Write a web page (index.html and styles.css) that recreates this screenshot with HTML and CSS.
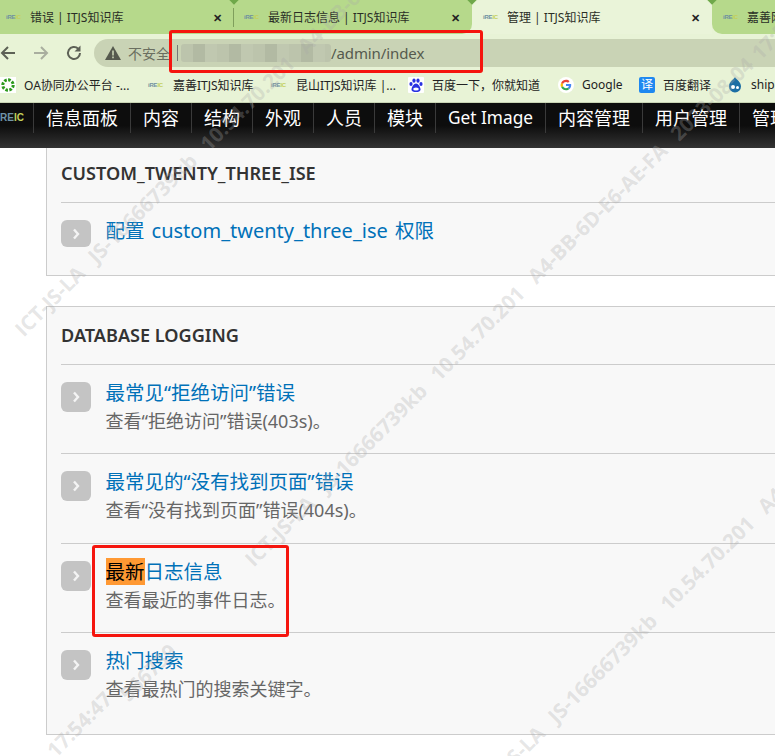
FILE: index.html
```html
<!DOCTYPE html>
<html lang="zh">
<head>
<meta charset="utf-8">
<title>管理 | ITJS知识库</title>
<link rel="stylesheet" href="styles.css">
</head>
<body>
<div class="page">
  <div class="tabstrip">
    <div class="tab tab-a"><span class="fav">iRE<b>IC</b></span><span class="tab-title">错误 | ITJS知识库</span><span class="tab-x">✕</span></div>
    <div class="tab tab-b"><span class="fav">iRE<b>IC</b></span><span class="tab-title">最新日志信息 | ITJS知识库</span><span class="tab-x">✕</span></div>
    <div class="tab tab-active"><span class="fav">iRE<b>IC</b></span><span class="tab-title">管理 | ITJS知识库</span><span class="tab-x">✕</span></div>
    <div class="tab tab-last"><span class="fav">iRE<b>IC</b></span><span class="tab-title">嘉善网</span></div>
  </div>
  <div class="toolbar">
    <svg class="nav-ico back" width="18" height="18" viewBox="0 0 18 18"><path d="M16 9H3M9 3 3 9l6 6" fill="none" stroke="#5d6156" stroke-width="2"/></svg>
    <svg class="nav-ico fwd" width="18" height="18" viewBox="0 0 18 18"><path d="M2 9h13M9 3l6 6-6 6" fill="none" stroke="#a9ae9f" stroke-width="2"/></svg>
    <svg class="nav-ico reload" width="18" height="18" viewBox="0 0 18 18"><path d="M15 9a6 6 0 1 1-1.800-4.300" fill="none" stroke="#5d6156" stroke-width="2"/><path d="M15.500 1.500v6h-6z" fill="#5d6156"/></svg>
    <div class="omnibox">
      <svg class="warn" width="16" height="14" viewBox="0 0 16 14"><path d="M8 0 16 14H0z" fill="#55594e"/><path d="M7.200 4.500h1.600v5H7.200zM7.200 10.500h1.600v1.700H7.200z" fill="#c9d3b5"/></svg>
      <span class="insecure">不安全</span>
      <span class="sep"></span>
      <span class="blur"></span>
      <span class="url">/admin/index</span>
    </div>
  </div>
  <div class="bookmarks">
    <div class="bm bm-oa">
      <svg width="16" height="16" viewBox="0 0 16 16"><rect width="16" height="16" fill="#fff"/><g fill="none" stroke="#2e9a1e" stroke-width="3" stroke-dasharray="2.600 1.400"><circle cx="8" cy="8" r="5.200"/></g></svg>
      <span>OA协同办公平台 -...</span>
    </div>
    <div class="bm bm-js"><span class="fav">iRE<b>IC</b></span><span>嘉善ITJS知识库</span></div>
    <div class="bm bm-ks"><span class="fav">iRE<b>IC</b></span><span>昆山ITJS知识库 |...</span></div>
    <div class="bm bm-bd">
      <svg width="16" height="16" viewBox="0 0 16 16"><rect width="16" height="16" rx="1" fill="#fff"/><g fill="#2932e1"><ellipse cx="3" cy="7" rx="1.600" ry="2.100"/><ellipse cx="6" cy="3.600" rx="1.600" ry="2.200"/><ellipse cx="10" cy="3.600" rx="1.600" ry="2.200"/><ellipse cx="13" cy="7" rx="1.600" ry="2.100"/><path d="M8 6.500c2 0 4.500 3.500 4.500 6 0 2-2 2.500-4.500 2.500S3.500 14.500 3.500 12.500c0-2.500 2.500-6 4.500-6z"/></g><ellipse cx="8" cy="12" rx="2.800" ry="1.600" fill="#fff"/></svg>
      <span>百度一下，你就知道</span>
    </div>
    <div class="bm bm-g">
      <svg width="16" height="16" viewBox="0 0 16 16"><circle cx="8" cy="8" r="8" fill="#fff"/><path d="M13.200 8.100c0-.4 0-.8-.1-1.100H8v2.100h2.900c-.1.700-.5 1.300-1.100 1.700l1.700 1.300c1-.9 1.700-2.300 1.700-4z" fill="#4285f4"/><path d="M8 13.300c1.400 0 2.600-.5 3.500-1.300l-1.700-1.300c-.5.300-1.100.5-1.800.5-1.400 0-2.600-.9-3-2.200L3.200 10.300c.9 1.800 2.700 3 4.800 3z" fill="#34a853"/><path d="M5 9c-.2-.7-.2-1.400 0-2L3.200 5.700c-.8 1.500-.8 3.100 0 4.600z" fill="#fbbc05"/><path d="M8 4.900c.8 0 1.500.3 2 .8l1.500-1.500C10.600 3.300 9.400 2.800 8 2.800c-2.100 0-3.900 1.200-4.800 2.900L5 7c.4-1.200 1.600-2.100 3-2.100z" fill="#ea4335"/></svg>
      <span>Google</span>
    </div>
    <div class="bm bm-fy"><span class="fy-ico">译</span><span>百度翻译</span></div>
    <div class="bm bm-sh">
      <svg width="16" height="16" viewBox="0 0 16 16"><path d="M8 0c1 2.500 6 4.500 6 9.500A6 6 0 0 1 2 9.500C2 4.500 7 2.500 8 0z" fill="#1c6ea4"/><circle cx="6" cy="10" r="2" fill="#fff"/><circle cx="10.500" cy="10.500" r="1.500" fill="#fff"/></svg>
      <span>ship</span>
    </div>
  </div>
  <nav class="sitenav">
    <span class="logo">RE<b>IC</b></span>
    <a class="nav-item nav-1">信息面板</a>
    <a class="nav-item nav-2">内容</a>
    <a class="nav-item nav-2">结构</a>
    <a class="nav-item nav-2">外观</a>
    <a class="nav-item nav-2">人员</a>
    <a class="nav-item nav-2">模块</a>
    <a class="nav-item nav-3">Get Image</a>
    <a class="nav-item nav-1">内容管理</a>
    <a class="nav-item nav-1">用户管理</a>
    <a class="nav-item nav-last">管理</a>
  </nav>
  <main class="content">
    <section class="panel panel-first">
      <h3 class="panel-title title-first">CUSTOM_TWENTY_THREE_ISE</h3>
      <div class="row row-single">
        <span class="arrow arrow-short"><svg width="8" height="12" viewBox="0 0 8 12"><path d="M2 1.500 6 6l-4 4.500" fill="none" stroke="#f4f4f4" stroke-width="2.400"/></svg></span>
        <div class="row-text"><a class="link link-spaced">配置 <span class="latin">custom_twenty_three_ise</span> 权限</a></div>
      </div>
    </section>
    <section class="panel panel-second">
      <h3 class="panel-title">DATABASE LOGGING</h3>
      <div class="row">
        <span class="arrow"><svg width="8" height="12" viewBox="0 0 8 12"><path d="M2 1.500 6 6l-4 4.500" fill="none" stroke="#f4f4f4" stroke-width="2.400"/></svg></span>
        <div class="row-text"><a class="link">最常见“拒绝访问”错误</a><p class="desc">查看“拒绝访问”错误(403s)。</p></div>
      </div>
      <div class="row">
        <span class="arrow"><svg width="8" height="12" viewBox="0 0 8 12"><path d="M2 1.500 6 6l-4 4.500" fill="none" stroke="#f4f4f4" stroke-width="2.400"/></svg></span>
        <div class="row-text"><a class="link">最常见的“没有找到页面”错误</a><p class="desc">查看“没有找到页面”错误(404s)。</p></div>
      </div>
      <div class="row">
        <span class="arrow"><svg width="8" height="12" viewBox="0 0 8 12"><path d="M2 1.500 6 6l-4 4.500" fill="none" stroke="#f4f4f4" stroke-width="2.400"/></svg></span>
        <div class="row-text"><a class="link"><mark class="hit">最新</mark>日志信息</a><p class="desc">查看最近的事件日志。</p></div>
      </div>
      <div class="row row-last">
        <span class="arrow"><svg width="8" height="12" viewBox="0 0 8 12"><path d="M2 1.500 6 6l-4 4.500" fill="none" stroke="#f4f4f4" stroke-width="2.400"/></svg></span>
        <div class="row-text"><a class="link">热门搜索</a><p class="desc">查看最热门的搜索关键字。</p></div>
      </div>
    </section>
  </main>
</div>
<div class="watermarks">
  <span class="wm wm-1">ICT-JS-LA  JS-16666739kb  10.54.70.201  A4-BB-6D-E6-AE-FA</span>
  <span class="wm wm-2">ICT-JS-LA  JS-16666739kb  10.54.70.201  A4-BB-6D-E6-AE-FA  2023-08-04 17:54:47</span>
  <span class="wm wm-3">ICT-JS-LA  JS-16666739kb  10.54.70.201  A4-BB-6D-E6-AE-FA</span>
  <span class="wm wm-4">17:54:47</span>
  <span class="wm wm-5">566739</span>
</div>
<div class="callout callout-url"></div>
<div class="callout callout-row"></div>
</body>
</html>
```

FILE: styles.css
```css
* { box-sizing: border-box; }
html, body { margin: 0; padding: 0; }
body {
  width: 775px;
  height: 756px;
  overflow: hidden;
  position: relative;
  background: #fff;
  font-family: "Noto Sans", "Noto Sans CJK SC", sans-serif;
}
.page { width: 775px; height: 756px; overflow: hidden; display: flex; flex-direction: column; }

/* browser tabs */
.tabstrip { height: 34px; flex: none; display: flex; background: #e8f3d6; font-size: 12px; color: #2a2e26; white-space: nowrap; overflow: hidden; }
.tab { height: 34px; flex: none; display: flex; align-items: center; position: relative; background: #b6d98b; }
.tab-a { width: 234px; padding-left: 6px; }
.tab-a::after { content: ""; position: absolute; right: 0; top: 8px; width: 1px; height: 19px; background: #7f9f5c; }
.tab-b { width: 238px; padding-left: 10px; border-bottom-right-radius: 10px; }
.tab-active { width: 240px; padding-left: 11px; background: #eaf4d9; border-radius: 10px 10px 0 0; }
.tab-last { flex: 1; padding-left: 11px; border-bottom-left-radius: 10px; }
.tab-b::before, .tab-active::before, .tab-last::before { content: ""; position: absolute; left: -4px; top: -5px; width: 8px; height: 8px; background: #6fa84a; transform: rotate(45deg); }
.fav { width: 18px; font: bold 6px/10px "Liberation Sans", sans-serif; color: #6f8fa0; flex: none; margin-right: 6px; letter-spacing: -.2px; }
.fav b { color: #c3cf5a; }
.tab-title { flex: 1; }
.tab-x { width: 21px; font-size: 11px; font-weight: 700; color: #222; flex: none; }

/* toolbar */
.toolbar { height: 33px; flex: none; background: #e8f3d6; display: flex; align-items: center; padding-top: 4px; }
.nav-ico { flex: none; }
.back { margin-left: -1px; }
.fwd { margin-left: 15px; }
.reload { margin-left: 15px; }
.omnibox { margin-left: 11px; flex: 1; height: 28px; background: #c9d3b5; border-radius: 14px 0 0 14px; display: flex; align-items: center; padding-left: 11px; font-size: 14px; color: #5b5f53; white-space: nowrap; }
.warn { flex: none; }
.insecure { margin-left: 7px; color: #6a6e60; }
.sep { width: 1px; height: 16px; background: #777; margin-left: 7px; flex: none; }
.blur { width: 150px; height: 18px; margin-left: 3px; flex: none; background: repeating-linear-gradient(90deg, #bcc4ac 0 12px, #b2baa3 12px 24px, #c0c8b0 24px 36px); border-radius: 3px; }
.url { color: #555a4e; font-size: 15px; letter-spacing: -.1px; }

/* bookmarks */
.bookmarks { height: 36px; flex: none; background: #e8f3d6; display: flex; align-items: center; font-size: 12px; color: #222; white-space: nowrap; border-bottom: 1px solid #c8d4b4; overflow: hidden; }
.bm { display: flex; align-items: center; flex: none; }
.bm svg { margin-right: 8px; flex: none; }
.bm .fav { margin-right: 7px; }
.bm-oa { width: 148px; }
.bm-js { width: 123px; }
.bm-ks { width: 137px; }
.bm-bd { width: 150px; }
.bm-g { width: 81px; }
.bm-fy { width: 88px; }
.fy-ico { width: 16px; height: 16px; background: #1e88f0; color: #fff; font-size: 12px; line-height: 16px; text-align: center; border-radius: 2px; margin-right: 8px; flex: none; }

/* site nav */
.sitenav { height: 45px; flex: none; background: linear-gradient(#0d0d0d 0 50%, #333 100%); display: flex; font-size: 18px; color: #fff; white-space: nowrap; overflow: hidden; }
.logo { width: 34px; flex: none; font: bold 10px/30px "Liberation Sans", sans-serif; color: #6f93a8; border-right: 1px solid #3a3a3a; height: 30px; }
.logo b { color: #c3cf5a; }
.nav-item { flex: none; height: 30px; line-height: 30px; border-right: 1px solid #3a3a3a; text-align: center; }
.nav-1 { width: 97px; }
.nav-2 { width: 61px; }
.nav-3 { width: 110px; font-size: 17.300px; }
.nav-last { width: 97px; padding-left: 12px; text-align: left; }

/* content */
.content { flex: 1; padding-left: 46px; margin-right: -40px; display: flex; flex-direction: column; gap: 30px; }
.panel { background: #f8f8f8; border: 1px solid #ccc; padding-left: 14px; padding-right: 0; }
.panel-first { border-top: 0; height: 128px; }
.panel-second { height: 429px; }
.panel-title { margin: 0; height: 58px; font-size: 18.100px; line-height: 57px; font-weight: 600; color: #333; border-bottom: 1px solid #ccc; }
.title-first { height: 55px; line-height: 51px; }
.row { height: 89.330px; display: flex; border-bottom: 1px solid #ccc; padding-top: 17px; }
.row-single { height: 72px; border: 0; padding-top: 17px; }
.row-last { border-bottom: 0; }
.arrow { width: 30px; height: 30px; border-radius: 6px; background: #c4c4c4; flex: none; display: flex; align-items: center; justify-content: center; }
.arrow-short { height: 27px; }
.row-text { margin-left: 14.500px; margin-top: -2px; }
.link { display: block; color: #0071b8; font-size: 19.500px; line-height: 26px; white-space: nowrap; }
.link-spaced { word-spacing: 2px; }
.latin { font-size: 20px; }
.desc { margin: 2px 0 0; font-size: 18px; line-height: 26px; color: #666; white-space: nowrap; }
.hit { background: #ff9933; color: #000; }

/* watermark overlay */
.watermarks { position: absolute; inset: 0; overflow: hidden; pointer-events: none; }
.wm { position: absolute; white-space: pre; font: 700 20.500px/24px "Open Sans", sans-serif; word-spacing: 2px; color: rgba(170,170,170,.3); transform: rotate(-45deg); transform-origin: 0 50%; }
.wm-1 { left: 18px; top: 320px; }
.wm-2 { left: 248px; top: 550px; }
.wm-3 { left: 478px; top: 780px; }
.wm-4 { left: 50px; top: 741px; }
.wm-5 { left: 123px; top: 685px; }

/* annotations */
.callout { position: absolute; border: 3px solid #f5150e; border-radius: 3px; }
.callout-url { left: 169px; top: 30px; width: 314px; height: 43px; }
.callout-row { left: 92px; top: 545px; width: 197px; height: 92px; }
```
